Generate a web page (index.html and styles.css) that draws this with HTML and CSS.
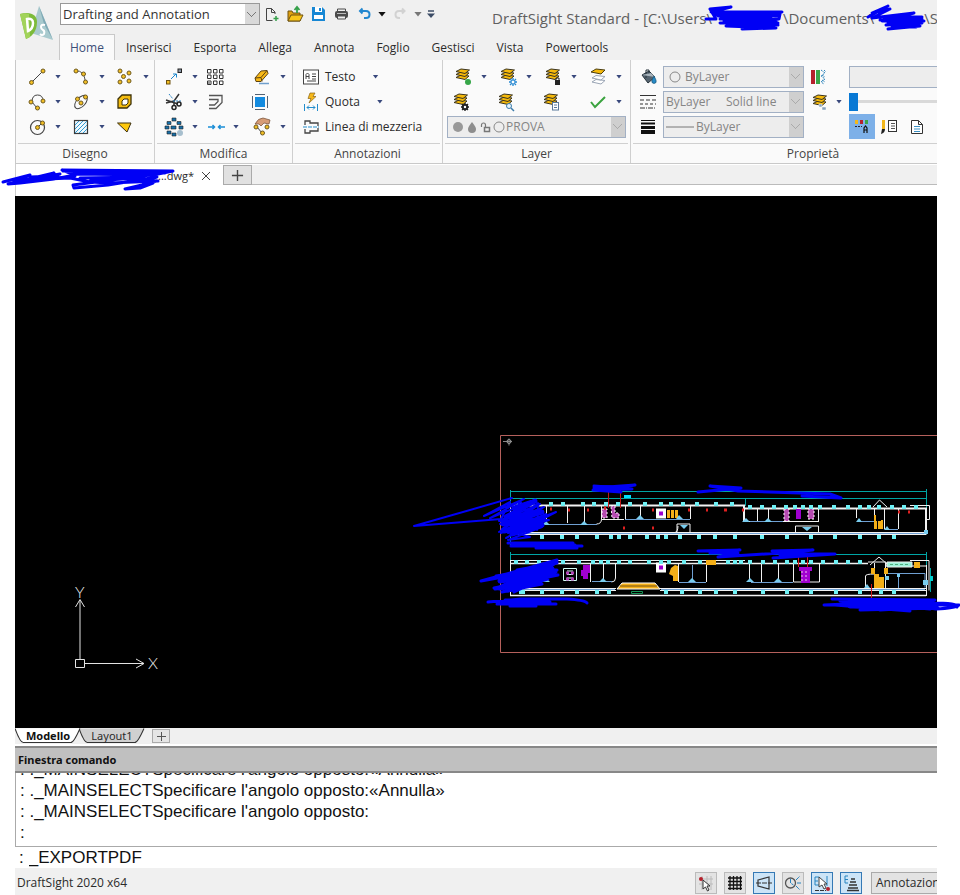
FILE: index.html
```html
<!DOCTYPE html>
<html lang="it">
<head>
<meta charset="utf-8">
<title>DraftSight Standard</title>
<link rel="stylesheet" href="styles.css">
</head>
<body>
<svg class="defs" aria-hidden="true">
  <symbol id="node" viewBox="-3 -3 6 6"><circle r="2" fill="#f2be24" stroke="#6e5a20" stroke-width="1"/></symbol>
  <symbol id="stack" viewBox="0 0 20 20">
    <g fill="#f5b90a" stroke="#3a3420" stroke-width="1" stroke-linejoin="round">
      <path d="M3 10.500l5-2.500 8 1-4 3.500z"/><path d="M3 7.500l5-2.500 8 1-4 3.500z"/><path d="M3 4.500l5-2.500 8.500 1-4.500 3.500z"/>
    </g>
  </symbol>
</svg>

<div class="app">
  <header class="header">
    <svg class="logo" viewBox="0 0 36 38" aria-label="DraftSight">
      <path d="M20 1L34 35L12 28z" fill="#a9cace"/><path d="M20 1L25 19L34 35z" fill="#7fa9b5"/>
      <path d="M1 9C12 6 18 10 18 17C18 27 12 32 7 34z" fill="#7dbb3a"/><path d="M1 9C5 8 8 8 10 9L11 32L7 34z" fill="#a2d35a"/>
      <path d="M8 14q6-1 6 4q0 6-5 8z" fill="none" stroke="#fff" stroke-width="2.500"/>
      <path d="M26 20q-4-1-4 2q0 2 2 3t1 4q-2 2-4 0" fill="none" stroke="#fff" stroke-width="2"/>
    </svg>
    <div class="header-main">
      <div class="quickbar">
        <select class="combo workspace" aria-label="Area di lavoro"><option>Drafting and Annotation</option></select>
        <div class="quick-tools">
          <button class="tool" aria-label="Nuovo"><svg viewBox="0 0 18 18"><path d="M3.500 3.500h5l3.500 3.500v2M3.500 3.500v12h6M8.500 3.500v4h3.500" fill="none" stroke="#444"/><path d="M13 11v5M10.500 13.500h5" stroke="#35a04a" stroke-width="1.500"/></svg></button>
          <button class="tool" aria-label="Apri"><svg viewBox="0 0 18 18"><path d="M2 16V6h4l1 2h7v8z" fill="#e0a010" stroke="#6e5210"/><path d="M2 16l3-6h12l-3 6z" fill="#f8c51a" stroke="#6e5210"/><path d="M11 8V3M8.500 5l2.500-3 2.500 3" fill="none" stroke="#35a04a" stroke-width="1.800"/></svg></button>
          <button class="tool" aria-label="Salva"><svg viewBox="0 0 18 18"><path d="M3 2h10l3 3v11H3z" fill="#1787d4"/><path d="M6 2h7v5H6zM5 10h9v4H5z" fill="#fff"/><path d="M10 3h2v3h-2z" fill="#1787d4"/></svg></button>
          <button class="tool" aria-label="Stampa"><svg viewBox="0 0 18 18"><rect x="3" y="6" width="13" height="7" rx="2" fill="#4b4b4b"/><path d="M5.500 6V4h8v2M5.500 11h8v3h-8z" fill="#eee" stroke="#4b4b4b"/><path d="M5 8.500h9" stroke="#bbb"/></svg></button>
          <button class="tool" aria-label="Annulla"><svg viewBox="0 0 18 18"><path d="M7.500 3.500L5 6l2.500 2.500M5 6h6q3.500 0 3.500 3.500T11 13H9" fill="none" stroke="#2387cf" stroke-width="2"/></svg></button>
          <button class="drop drop-black" aria-label="Elenco annulla"></button>
          <button class="tool" aria-label="Ripeti"><svg viewBox="0 0 18 18"><path d="M11 3.500L13.500 6 11 8.500M13.500 6H8Q4.500 6 4.500 9.500T8 13h1" fill="none" stroke="#d2d2d2" stroke-width="2"/></svg></button>
          <button class="drop drop-gray" aria-label="Elenco ripeti"></button>
          <button class="custom" aria-label="Personalizza"><svg viewBox="0 0 8 10"><path d="M1 2h6" stroke="#3c4c66" stroke-width="1.500"/><path d="M0 4.500h8L4 9z" fill="#3c4c66"/></svg></button>
        </div>
        <h1 class="title"><span>DraftSight Standard - [C:\Users\</span><svg class="mask mask-user" viewBox="0 0 78 26"><path d="M0 14H10L4 4L25 2L5 7H76L60 14H14L74 9L73 14L14 18H72L20 21L70 23L36 24M8 10H70M28 15L72 20M16 12H65M12 11H72M18 16H70M26 19H70M40 22H68"/></svg><span>\Documents\</span><svg class="mask mask-dir" viewBox="0 0 57 26"><path d="M0 12L20 1L4 8L22 4L4 13L46 8L14 16H56L18 20L54 18L20 24L52 21L18 12H54M12 15H50M16 14H54M20 18H50M24 22H48"/></svg><span>\S</span></h1>
      </div>
      <nav class="tabs" aria-label="Schede">
        <button class="tab active">Home</button><button class="tab">Inserisci</button><button class="tab">Esporta</button><button class="tab">Allega</button><button class="tab">Annota</button><button class="tab">Foglio</button><button class="tab">Gestisci</button><button class="tab">Vista</button><button class="tab">Powertools</button>
      </nav>
    </div>
  </header>

  <section class="ribbon" aria-label="Barra multifunzione">
    <div class="group">
      <div class="tools draw">
        <button class="tool" aria-label="Linea"><svg viewBox="0 0 20 20"><path d="M5 15L16 4" stroke="#444"/><use href="#node" x="1.500" y="12.500" width="6" height="6"/><use href="#node" x="13" y="1" width="6" height="6"/></svg></button><button class="drop" aria-label="Altre linee"></button>
        <button class="tool" aria-label="Polilinea"><svg viewBox="0 0 20 20"><path d="M5 4Q13 3 14.500 15" fill="none" stroke="#555"/><use href="#node" x="2" y="1" width="6" height="6"/><use href="#node" x="9.500" y="4" width="6" height="6"/><use href="#node" x="11.500" y="12" width="6" height="6"/></svg></button><button class="drop" aria-label="Altre polilinee"></button>
        <button class="tool" aria-label="Punti"><svg viewBox="0 0 20 20"><use href="#node" x="2" y="1" width="6" height="6"/><use href="#node" x="11" y="3" width="6" height="6"/><use href="#node" x="5.500" y="6.500" width="6" height="6"/><use href="#node" x="2" y="12" width="6" height="6"/><use href="#node" x="11" y="11" width="6" height="6"/></svg></button><button class="drop" aria-label="Altri punti"></button>
        <button class="tool" aria-label="Arco"><svg viewBox="0 0 20 20"><path d="M10 16L5 10Q5 3 10.500 3T16 9" fill="none" stroke="#444"/><use href="#node" x="1" y="7" width="6" height="6"/><use href="#node" x="13" y="6" width="6" height="6"/><use href="#node" x="7.500" y="13" width="6" height="6"/></svg></button><button class="drop" aria-label="Altri archi"></button>
        <button class="tool" aria-label="Ellisse"><svg viewBox="0 0 20 20"><ellipse cx="10" cy="10" rx="8" ry="4.500" transform="rotate(-48 10 10)" fill="none" stroke="#444"/><use href="#node" x="3.500" y="4" width="6" height="6"/><use href="#node" x="11.500" y="2" width="6" height="6"/><use href="#node" x="7" y="8" width="6" height="6"/></svg></button><button class="drop" aria-label="Altre ellissi"></button>
        <button class="tool" aria-label="Regione"><svg viewBox="0 0 20 20"><path d="M3 7l4-4h9v9l-4 4H3z" fill="#f5bd10" stroke="#3d3208" stroke-width="1.300"/><path d="M7 9l2-2h4v4l-2 2H7z" fill="#fff" stroke="#3d3208"/></svg></button><span></span>
        <button class="tool" aria-label="Cerchio"><svg viewBox="0 0 20 20"><circle cx="10.500" cy="10.500" r="7" fill="none" stroke="#444" stroke-width="1.200"/><path d="M10 11l5-5" stroke="#444"/><use href="#node" x="7.500" y="7.500" width="6" height="6"/><use href="#node" x="12.500" y="3" width="6" height="6"/></svg></button><button class="drop" aria-label="Altri cerchi"></button>
        <button class="tool" aria-label="Tratteggio"><svg viewBox="0 0 20 20"><rect x="3.500" y="3.500" width="13" height="13" fill="#eef9ff" stroke="#3b3b3b" stroke-width="1.200"/><path d="M4 8l4-4M4 12l8-8M4 16L16 4M8 16l8-8M12 16l4-4" stroke="#339ad0"/></svg></button><button class="drop" aria-label="Altri tratteggi"></button>
        <button class="tool" aria-label="Solido"><svg viewBox="0 0 20 20"><path d="M2.500 6H16l-4 9z" fill="#fec80d" stroke="#3c3010"/></svg></button><span></span>
      </div>
      <div class="caption">Disegno</div>
    </div>

    <div class="group">
      <div class="tools modify">
        <button class="tool" aria-label="Sposta"><svg viewBox="0 0 20 20"><rect x="2.500" y="13.500" width="3.500" height="3.500" fill="#f2be24" stroke="#6e5210"/><rect x="14" y="2" width="3.500" height="3.500" fill="#8a97a6" stroke="#222"/><path d="M7 12l5-5M9 7h3.500v3.500" fill="none" stroke="#1b86cc"/></svg></button><button class="drop" aria-label="Altri spostamenti"></button>
        <button class="tool" aria-label="Serie"><svg viewBox="0 0 20 20"><path d="M2.500 2.500h3.500v3.500H2.500zM8.500 2.500H12v3.500H8.500zM14.500 2.500H18v3.500h-3.500zM2.500 8H6v3.500H2.500zM8.500 8H12v3.500H8.500zM14.500 8H18v3.500h-3.500zM2.500 14H6v3.500H2.500zM8.500 14H12v3.500H8.500zM14.500 14H18v3.500h-3.500z" fill="#fff" stroke="#333"/><path d="M3 14.500h2.500V17H3z" fill="#999"/></svg></button><span></span>
        <button class="tool" aria-label="Elimina"><svg viewBox="0 0 20 20"><path d="M7 16.500h10" stroke="#6f9fcc" stroke-width="1.500"/><path d="M3 11l6-7 6-.5 1 3-7 8H4z" fill="#f9b916" stroke="#5e4310"/><path d="M3 11l6-.5 6-7M9 10.500l1 4" fill="none" stroke="#5e4310"/></svg></button><button class="drop" aria-label="Altre eliminazioni"></button>
        <button class="tool" aria-label="Taglia"><svg viewBox="0 0 20 20"><path d="M2 8l12 4M10 14V9l5-7M2 11l8-2" fill="none" stroke="#333" stroke-width="1.500"/><path d="M5 2l4 5M9 9h8" stroke="#2a83c4" stroke-dasharray="2 1"/><circle cx="15" cy="12" r="2" fill="none" stroke="#222" stroke-width="1.500"/><circle cx="10" cy="15.500" r="2" fill="none" stroke="#222" stroke-width="1.500"/></svg></button><button class="drop" aria-label="Altri tagli"></button>
        <button class="tool" aria-label="Offset"><svg viewBox="0 0 20 20"><path d="M4 3.500h13v7l-6 6H4M4 7.500h9v2l-3.500 3.500H4" fill="none" stroke="#555" stroke-width="1.300"/></svg></button><span></span>
        <button class="tool" aria-label="Stira"><svg viewBox="0 0 20 20"><rect x="3" y="5" width="10" height="10" fill="#138be0"/><path d="M.5 4v12M15.500 4v12M3 2.500h10M3 17.500h10" stroke="#526172"/></svg></button><span></span>
        <button class="tool" aria-label="Serie polare"><svg viewBox="0 0 20 20"><path d="M8 1h4v3H8zM3 4.500h4v3H3zM13 4.500h4v3h-4zM1 9h4v3H1zM7 9h5v3H7zM15 9h4v3h-4zM3 14h4v3H3zM8 16h4v3H8z" fill="#176fa8" stroke="#222" stroke-width=".6"/><circle cx="16" cy="16" r="3" fill="#a7bfce"/></svg></button><button class="drop" aria-label="Altre serie"></button>
        <button class="tool" aria-label="Unisci"><svg viewBox="0 0 20 20"><path d="M3 10h7M7.500 8l2 2-2 2M20 10h-7M15.500 8l-2 2 2 2" fill="none" stroke="#1b8ed6" stroke-width="1.500"/></svg></button><button class="drop" aria-label="Altre unioni"></button>
        <button class="tool" aria-label="Modifica polilinea"><svg viewBox="0 0 20 20"><path d="M10 16L5 10" stroke="#444"/><use href="#node" x="1" y="7" width="6" height="6"/><use href="#node" x="12" y="7" width="6" height="6"/><use href="#node" x="7.500" y="13" width="6" height="6"/><path d="M3 7q3-6 8-6l7 2-1 4-5-1-3 3-2-2z" fill="#d69c76" stroke="#704a32" stroke-width=".7"/></svg></button><button class="drop" aria-label="Altre modifiche"></button>
      </div>
      <div class="caption">Modifica</div>
    </div>

    <div class="group">
      <div class="notes">
        <div class="note"><button class="labelled"><svg viewBox="0 0 20 20"><rect x="2.500" y="3" width="15" height="14" fill="#fff" stroke="#444"/><path d="M5 12V7.500L6.500 6 8 7.500V12M5 9.500h3M11 7h4M11 9.500h4M6 14h9M11 12h4" fill="none" stroke="#444"/></svg>Testo</button><button class="drop" aria-label="Altri testi"></button></div>
        <div class="note"><button class="labelled"><svg viewBox="0 0 20 20"><path d="M9 1h5l-2 3.500h3L8 11l2-4.500H7z" fill="#f6b81a" stroke="#8a651a" stroke-width=".7"/><path d="M3.500 12v7M16.500 12v7M6 15.500h8M8 13.500l-2 2 2 2M12 13.500l2 2-2 2" fill="none" stroke="#238dcc"/></svg>Quota</button><button class="drop" aria-label="Altre quote"></button></div>
        <div class="note"><button class="labelled"><svg viewBox="0 0 20 20"><path d="M4 8V4h5v2h8v3M4 12v4h5v-2h8v-3" fill="none" stroke="#444" stroke-width="1.300"/><path d="M2 10h16" stroke="#238dcc" stroke-dasharray="4 1"/></svg>Linea di mezzeria</button></div>
      </div>
      <div class="caption">Annotazioni</div>
    </div>

    <div class="group">
      <div class="tools layers">
        <button class="tool" aria-label="Attiva layer"><svg viewBox="0 0 20 20"><use href="#stack"/><circle cx="15" cy="15" r="3" fill="#36a648"/></svg></button><button class="drop" aria-label="Altri layer"></button>
        <button class="tool" aria-label="Congela layer"><svg viewBox="0 0 20 20"><use href="#stack"/><path d="M15 11v8M11 15h8M12 12l6 6M18 12l-6 6" stroke="#2789d2" stroke-width="1.300"/><circle cx="15" cy="15" r="2" fill="#fff" stroke="#2789d2"/></svg></button><button class="drop" aria-label="Altri congelamenti"></button>
        <button class="tool" aria-label="Blocca layer"><svg viewBox="0 0 20 20"><use href="#stack"/><rect x="12" y="13" width="5" height="5" fill="#222"/><path d="M13 13v-2h3v2" fill="none" stroke="#222"/></svg></button><button class="drop" aria-label="Altri blocchi"></button>
        <button class="tool" aria-label="Isola layer"><svg viewBox="0 0 20 20"><g fill="#fff" stroke="#9aa5b5"><path d="M4 15l4-2.500 9 1-4 3.500z"/><path d="M4 11l4-2.500 9 1-4 3.500z"/></g><path d="M3 5l5-3 9 1-4 4z" fill="#f5b90a" stroke="#4a3d10"/></svg></button><button class="drop" aria-label="Altri isolamenti"></button>
        <button class="tool" aria-label="Gestione layer"><svg viewBox="0 0 20 20"><g transform="translate(-2 0)"><use href="#stack" width="20" height="20"/></g><circle cx="12" cy="15" r="2.200" fill="#fff" stroke="#222" stroke-width="2"/><path d="M12 11v1.500M12 17.500V19M8 15h1.500M14.500 15H16M9 12l1 1M14 17l1 1M9 18l1-1M14 13l1-1" stroke="#222" stroke-width="1.300"/></svg></button><span></span>
        <button class="tool" aria-label="Anteprima layer"><svg viewBox="0 0 20 20"><g transform="translate(-2 0)"><use href="#stack" width="20" height="20"/></g><circle cx="11" cy="14" r="2.500" fill="#e5f4ff" stroke="#3d7caa"/><path d="M13 16l3 3" stroke="#3d7caa" stroke-width="1.500"/></svg></button><span></span>
        <button class="tool" aria-label="Stati layer"><svg viewBox="0 0 20 20"><g transform="translate(-2 0)"><use href="#stack" width="20" height="20"/></g><rect x="9.500" y="10.500" width="6" height="7.500" fill="#fff" stroke="#59789a"/><path d="M11 13h3M11 15.500h3" stroke="#59789a"/></svg></button><span></span>
        <button class="tool" aria-label="Applica layer"><svg viewBox="0 0 20 20"><path d="M3 10l4 5L17 5" fill="none" stroke="#3aa33f" stroke-width="2"/></svg></button><button class="drop" aria-label="Altre applicazioni"></button>
        <div class="field layer-field"><svg class="layer-marks" viewBox="0 0 54 16"><circle cx="6" cy="8" r="5" fill="#989898"/><path d="M20 3Q16 8 16 10a4 4 0 0 0 8 0Q24 8 20 3z" fill="#8d8d8d"/><path d="M29.500 8V6a2 2 0 0 1 4 0v2" fill="none" stroke="#777" stroke-width="1.200"/><path d="M32.500 8.500h5v4h-5z" fill="none" stroke="#777" stroke-width="1.500"/><circle cx="47" cy="8" r="5" fill="none" stroke="#888"/></svg><select class="combo muted" aria-label="Layer"><option>PROVA</option></select></div>
      </div>
      <div class="caption">Layer</div>
    </div>

    <div class="group properties">
      <div class="props">
        <svg class="icon" viewBox="0 0 20 20"><path d="M4 8l7-4 6 6-7 6z" fill="#566470" stroke="#26323a"/><path d="M8 11V3h3v6" fill="none" stroke="#26323a"/><path d="M4 8l13 2-4-4z" fill="#aab5bd"/><path d="M16 9q-3 5-2 6.500 2 2 4 0Q19 14 16 9z" fill="#278cc8" stroke="#1b5577" stroke-width=".7"/></svg>
        <div class="field color-field"><svg class="color-mark" viewBox="0 0 14 14"><circle cx="7" cy="7" r="5" fill="none" stroke="#888"/></svg><select class="combo muted" aria-label="Colore linea"><option>ByLayer</option></select></div>
        <div class="side"><svg class="icon" viewBox="0 0 20 20"><path d="M2 3h4v14H2z" fill="#b5202c"/><path d="M7 3h4v14H7z" fill="#3aa548"/><path d="M12 3l4 3-4 3 4 3-4 3 3 2M15 3l2 2M13 8l3 2M13 13l3 2" fill="none" stroke="#2a83bb" stroke-dasharray="2 1"/></svg></div>
        <input class="entry" aria-label="Trasparenza" value="">

        <svg class="icon" viewBox="0 0 20 20"><path d="M2 3.500h16" stroke="#333"/><path d="M2 8h16" stroke="#333" stroke-dasharray="4 2"/><path d="M2 12h16" stroke="#333" stroke-dasharray="3 2"/><path d="M2 16h16" stroke="#333" stroke-dasharray="5 1 1 1"/></svg>
        <div class="field"><select class="combo muted" aria-label="Stile linea"><option>ByLayer &nbsp; &nbsp; Solid line</option></select></div>
        <div class="side"><button class="tool" aria-label="Proprietà layer"><svg viewBox="0 0 20 20"><g transform="translate(1 1)"><use href="#stack" width="20" height="20"/></g><path d="M10 12h3v3h-3zM13 15h4v3h-4z" fill="#86a3bd" stroke="#fff" stroke-width=".5"/></svg></button><button class="drop" aria-label="Altre proprietà layer"></button></div>
        <input class="slider" type="range" min="0" max="90" value="0" aria-label="Livello trasparenza">

        <svg class="icon" viewBox="0 0 20 20"><path d="M3 3.500h14" stroke="#111" stroke-width="1"/><path d="M3 6.500h14" stroke="#111" stroke-width="2"/><path d="M3 10.500h14" stroke="#111" stroke-width="3"/><path d="M3 15h14" stroke="#111" stroke-width="4"/></svg>
        <div class="field weight-field"><svg class="weight-mark" viewBox="0 0 28 4"><path d="M0 2h28" stroke="#777"/></svg><select class="combo muted" aria-label="Spessore linea"><option>ByLayer</option></select></div>
        <span></span>
        <div class="prop-buttons">
          <button class="tool pressed" aria-label="Proprietà"><svg viewBox="0 0 20 20"><path d="M3 3h3v4H3z" fill="#f2b71b"/><path d="M8 3h3v4H8z" fill="#b5202c"/><path d="M13 3h3v4h-3z" fill="#3aa548"/><path d="M3 9.500h7" stroke="#223" stroke-dasharray="2 1"/><path d="M12 16v-5l1.500-2 1.500 2v5M12 13h3" fill="none" stroke="#111" stroke-width="1.200"/></svg></button>
          <button class="tool" aria-label="Copia proprietà"><svg viewBox="0 0 20 20"><path d="M2 3h3v9H2z" fill="#f2b71b"/><path d="M2 12h3q0 4-4 5z" fill="#222"/><rect x="8.500" y="3.500" width="8" height="11" fill="#fff" stroke="#333"/><path d="M11 6.500h4M11 9h4M11 11.500h4" stroke="#555"/></svg></button>
          <button class="tool" aria-label="Elenco"><svg viewBox="0 0 20 20"><path d="M3.500 3.500h7l4 4v9h-11zM10.500 3.500v4h4" fill="#fff" stroke="#333"/><path d="M6 9.500h6M6 12h6M6 14.500h6" stroke="#3b91c4"/></svg></button>
        </div>
      </div>
      <div class="caption">Proprietà</div>
    </div>
  </section>

  <div class="filebar">
    <div class="filetab"><span>...dwg*</span><button class="close" aria-label="Chiudi"><svg viewBox="0 0 12 12"><path d="M2 2l8 8M10 2l-8 8" stroke="#444"/></svg></button>
      <svg class="tab-mask" viewBox="0 0 180 30"><path d="M3 17L30 10L12 18L54 8L8 19L20 18L54 14L75 10L62 5L173 6L158 9L73 20L74 23L108 20L157 12L142 16H157L142 20L125 24L140 23L153 18M63 6L165 8M75 9L155 10M80 13L145 12M90 16L140 13M30 12L58 11M24 15L70 13L90 17L110 18L158 16M20 16L60 9M30 16L75 11"/></svg>
    </div>
    <button class="add-tab" aria-label="Nuovo disegno"><svg viewBox="0 0 14 14"><path d="M7 1v12M1 7h12" stroke="#444" stroke-width="1.500"/></svg></button>
    <div class="filebar-rest"></div>
  </div>

  <main class="canvas">
    <svg class="drawing" viewBox="15 196 922 532" preserveAspectRatio="xMaxYMin meet" role="img" aria-label="Pianta">
      <!-- sheet border and view marker -->
      <path d="M937 435.500H500.500V652.500H937" fill="none" stroke="#b5605c"/>
      <path d="M503 441.500h9M509 438.500v7" stroke="#888"/><circle cx="509" cy="441.500" r="2" fill="none" stroke="#999"/>
      <!-- coordinate system symbol -->
      <g fill="none" stroke="#e4e4e4"><path d="M75.500 659.500h9v8h-9zM80 659V600M75.500 607L80 599.500 84.500 607M85 663.500h59M136 659l8 4.500-8 4.500"/></g>
      <text class="axis" x="75" y="598">Y</text><text class="axis" x="148" y="669">X</text>

      <!-- dimension lines -->
      <g fill="none" stroke="#00a5a5"><path d="M510 491.500h417M510 498.500h417M510.500 490v57M926.500 489v20M745.500 498v8M510 545.500h60M510 554.500h417M510.500 552v12M926.500 552v14M930.500 568v24"/></g>
      <path d="M624 496.500h7" stroke="#00e0ff" stroke-width="3"/>

      <!-- upper building -->
      <g fill="none" stroke="#f2f2f2">
        <path d="M510 505.500h234v16M743 508.500h183v26" stroke-width="2"/>
        <path d="M510 532.500h416M510 534.500h416M510.500 505v30"/>
        <path d="M546.500 506v17M567.500 506v17M584.500 506v17M601.500 506v13q0 5-5 5M625.500 506v13M640.500 506v13M690.500 506v13M677 532v-8h13v8M757.500 509v12M768.500 509v12M818.500 509v12M795.500 533v-7h23v7M856.500 509v9M874.500 509v20M884.500 509v20M898.500 509v20M873 507l6.500-7 7.500 7M910 505.500h19.500v14h-3M674 533q4-1 4-7"/>
        <path d="M602 519.500h22M743 521.500h8M783 521.500h36"/>
      </g>
      <path d="M540 524.500h57M625 519.500h65M750 521.500h33M857 521.500h17M885 529.500h13M512 533.500h413" fill="none" stroke="#6f9fd2"/>
      <path d="M602 509h5v9h-5zM611 506h4v7h4v5h-7zM784 509h5v12h-5zM808 509h6v10h-6z" fill="#b54bb0" stroke="#fff" stroke-dasharray="2 2"/>
      <path d="M796 509h5v10h-5z" fill="#9d00cf"/><path d="M657.500 510h7v7h-7z" fill="#9d00cf" stroke="#fff" stroke-width="3"/>
      <path d="M667 514h11M874 525h9" stroke="#f4af18" stroke-width="8" stroke-dasharray="3 1"/><path d="M875 515v13M882 520v9" stroke="#f4af18" stroke-width="2"/>
      <path class="windows" d="M517 504h4m28 0h4m8 0h4m16 0h4m7 0h4m8 0h4m8 0h4m8 0h4m11 0h4m12 0h4m6 0h4m8 0h4m10 0h4m15 0h4m12 0h4M748 507h4m8 0h4m8 0h4m8 0h4m5 0h4m4 0h4m4 0h4m5 0h4m10 0h4m10 0h4m8 0h4m5 0h4m6 0h4m9 0h4m8 0h4m8 0h4"/>
      <path class="windows" d="M540 537h4m16 0h4m11 0h4m16 0h4m10 0h4m4 0h4m7 0h4m13 0h4m7 0h4m4 0h4m10 0h4m15 0h4m12 0h4m16 0h4m23 0h4m21 0h4m20 0h4m20 0h4m21 0h4m15 0h4m11 0h4"/>
      <path class="doors" d="M542 525l4-4 4 4zM580 525l4-4 4 4zM636 519l4-4 4 4zM676 519l3-4 4 4zM680 525h8l-4 4zM742 522l4-4 4 4zM764 522l4-4 4 4zM802 527h10l-5 4zM856 522l3-4 3 4zM884 530l3-4 3 4zM924 530h4v4h-4z"/>
      <path d="M531 510h2M550 509h2M568 510h2M587 510h2M652 510h2M688 510h2M706 510h2M724 510h3M742 510h2M623 528h2M652 528h2M908 512h2M898 512h2M604 508h2" stroke="#e02020" stroke-width="3"/>
      <path d="M608.500 490v18M620.500 490v18" stroke="#c01818"/>

      <!-- lower building -->
      <g fill="none" stroke="#f2f2f2">
        <path d="M510 563.500h358M510 595.500h416" stroke-width="1.500"/><path d="M510 560.500h235M510.500 560v36M510 588.500h106M660 588.500h266M510 590.500h106M660 590.500h266M926.500 565v31M910 560.500h19v30"/>
        <path d="M590.500 564v18M603.500 564v18M615.500 564v14q0 4-4 4M678.500 564v18M706.500 564v18M749.500 564v18M761.500 564v18M778.500 564v18M793.500 564v18h26v-18M865.500 590v-14q0-2 9-2M874.500 563v26h11v-26M870 565l9-8 8 7M868 562h18v4h40"/>
      </g>
      <path d="M592 581.500h20M679 582.500h27M751 582.500h42M887 573.500h38v14M898.500 574v14M692.500 565v14M512 589.500h103M661 589.500h264" fill="none" stroke="#6f9fd2"/>
      <path d="M563.500 568.500h13v12h-13zM567 571h6M567 574.500h6M567 578h6" fill="none" stroke="#d5fff5"/><path d="M566 573h8M566 579h8" stroke="#b040b0" stroke-width="3" stroke-dasharray="3 2"/>
      <path d="M583 565h7v8h-2v6h-5v-3h-2v-6h2z" fill="#a000d0"/><path d="M799 567h13v4h-2v12h-9v-12h-2z" fill="#a000d0"/><path d="M801 572h8M801 576h8M801 580h8" stroke="#f0c0ec" stroke-dasharray="2 2"/>
      <path d="M657.500 564h7v7h-7z" fill="#9d00cf" stroke="#fff" stroke-width="3"/>
      <path d="M671 568l4-3 3 1v15h-5v-5l-4-2zM706 560h10v5h-10zM874 574h5v3h5v11h-10zM914 562h6v6h-6z" fill="#f4af18"/><path d="M871 571h4M884 571h4" stroke="#f4af18" stroke-width="6"/>
      <path d="M617 589l5-6h33l5 6z" fill="#f4af18" stroke="#fff"/><path d="M620 586h37" stroke="#75510e"/>
      <path d="M631.500 591.500h11v2h-11z" fill="none" stroke="#159556"/><path d="M887 562h25v5h-25z" fill="#9cf2da" stroke="#eee"/><path d="M890 564.500h20" stroke="#4fae7e" stroke-dasharray="3 2"/>
      <path class="windows" d="M514 562h4m7 0h4m8 0h4m20 0h4m12 0h4m10 0h4m4 0h4m3 0h4m7 0h4m7 0h4m15 0h4m8 0h4m4 0h4m11 0h4m12 0h4m24 0h4m3 0h4m2 0h4m5 0h4m9 0h4m8 0h4m8 0h4m4 0h4m4 0h4m4 0h4m8 0h4m9 0h4m8 0h4m8 0h4"/>
      <path class="windows" d="M519 592h6m15 0h4m16 0h4m11 0h4m16 0h4m8 0h4m53 0h4m12 0h4m14 0h4m12 0h4m15 0h4m24 0h4m20 0h4m20 0h4m21 0h4m20 0h4m17 0h4m9 0h4"/>
      <path class="doors" d="M599 582l4-4 4 4zM541 582l5-4 4 4zM688 582l4-4 4 4zM746 582l4-4 4 4zM774 582l4-4 4 4zM864 588l3-4 3 4zM885 576h4v4h-4zM897 574h3v3h-3zM923 580h5v5h-5z"/><path d="M930 576h3v5h-3z" fill="#00cfcf"/>
      <path d="M798.500 556v11M807.500 556v11M871.500 584v21h8M917 601h16" fill="none" stroke="#d11a1a"/>

      <!-- freehand marks -->
      <g class="ink">
        <path d="M512 498L414 526L501 519L510 502L484 516L524 499L490 518L535 500L500 524L544 507L501 533L546 514L506 538L556 512L510 530L542 527L508 540L530 537L502 529L538 503L537 530L520 501L508 533L549 520L499 521L540 504L499 532"/>
        <path class="broad" d="M514 508L535 501L506 517L542 512L503 524L543 519L504 531L542 525L512 534L532 528"/>
        <path d="M508 543H573M511 546H582M536 548H577M520 544H570M530 545H575"/>
        <path d="M594 486L632 489L602 490L635 485L594 488L621 492L593 490L626 488"/>
        <path d="M698 492L741 488L710 486L738 491L830 494L841 498L802 496"/>
        <path d="M557 560L481 581L552 568L496 576L558 575L494 588L548 579L502 592L542 584L495 589L541 567L502 575L557 563L517 570L557 570L505 585L556 572L514 592L557 562"/>
        <path class="broad" d="M550 564L508 576L552 569L500 581L553 574L500 588L536 582L508 590"/>
        <path d="M488 602L521 599H567Q585 600 587 603M497 604H556M505 600H535M510 606H536M500 602H550"/>
        <path d="M698 551L740 550L710 553H738L718 557L780 553L835 554L773 558M772 551L813 550L785 553L820 555L780 555"/>
        <path d="M832 599L935 600L824 605L959 605Q955 608 936 609L900 603L850 606L938 608L860 610L930 603Q960 603 957 607M845 602L925 602L835 605L910 611L870 600L930 609L840 601"/>
        <path class="broad" d="M850 602H932L850 606H930L880 609"/>
      </g>
    </svg>
  </main>

  <div class="sheets">
    <button class="sheet current">Modello<svg viewBox="0 0 64 17" preserveAspectRatio="none"><path d="M0 .5Q5 15.500 8 15.500H54Q57 15.500 63 .5"/></svg></button>
    <button class="sheet">Layout1<svg viewBox="0 0 64 17" preserveAspectRatio="none"><path d="M0 .5Q5 15.500 8 15.500H54Q57 15.500 63 .5"/></svg></button>
    <button class="add-sheet" aria-label="Nuovo foglio"><svg viewBox="0 0 11 11"><path d="M5.500 1v9M1 5.500h9" stroke="#555"/></svg></button>
  </div>

  <section class="command" aria-label="Finestra comando">
    <h2 class="command-title">Finestra comando</h2>
    <div class="history">
      <div>: ._MAINSELECTSpecificare l'angolo opposto:«Annulla»</div>
      <div>: ._MAINSELECTSpecificare l'angolo opposto:«Annulla»</div>
      <div>: ._MAINSELECTSpecificare l'angolo opposto:</div>
      <div>:</div>
    </div>
    <div class="prompt"><label for="cmd">:</label><input id="cmd" value="_EXPORTPDF"></div>
  </section>

  <footer class="status">
    <span class="version">DraftSight 2020 x64</span>
    <div class="modes">
      <button class="mode" aria-label="Snap"><svg viewBox="0 0 20 20"><path d="M3 6h14M3 11h14M6 3v14M11 3v14M15 3v14" stroke="#bbb"/><circle cx="5" cy="6" r="2" fill="#b5202c"/><path d="M7 7v9l2.500-2 2 4 1.500-1-2-4h3z" fill="#fff" stroke="#333"/></svg></button>
      <button class="mode" aria-label="Griglia"><svg viewBox="0 0 20 20"><path d="M3 5h14M3 8.500h14M3 12h14M3 15.500h14M5 3v14M8.500 3v14M12 3v14M15.500 3v14" stroke="#111" stroke-width="1.300"/></svg></button>
      <button class="mode on" aria-label="Orto"><svg viewBox="0 0 20 20"><path d="M4 7l11-3v12L4 13z" fill="none" stroke="#333" stroke-width="1.200"/><path d="M2 10h16" stroke="#333" stroke-dasharray="5 1"/></svg></button>
      <button class="mode" aria-label="Polare"><svg viewBox="0 0 20 20"><circle cx="7.500" cy="10" r="5" fill="none" stroke="#555" stroke-width="1.300"/><path d="M7.500 6v4l3 2M13 7l4-4M14 10h5M13 13l4 4" fill="none" stroke="#2784c0" stroke-dasharray="4 1"/></svg></button>
      <button class="mode on" aria-label="ESnap"><svg viewBox="0 0 20 20"><path d="M7 4H3v8h4M3 8h3M15 3v10" fill="none" stroke="#2784c0"/><path d="M3 17.500h11" stroke="#333" stroke-dasharray="4 1"/><path d="M7 4v10l3-2 2 4 2-1-2-4h3z" fill="#fff" stroke="#444"/><circle cx="16" cy="16" r="2" fill="#b5202c"/></svg></button>
      <button class="mode on" aria-label="ETrack"><svg viewBox="0 0 20 20"><path d="M7 3H4v7h3M4 6.500h3" fill="none" stroke="#2784c0"/><path d="M10 6h4M9 9h6M8 12h8M7 15h10M6 17.500h12" stroke="#333" stroke-width="1.300"/></svg></button>
    </div>
    <button class="scale">Annotazione</button>
  </footer>
</div>
</body>
</html>
```
FILE: styles.css
```css
* { box-sizing: border-box; }
body { margin: 0; background: #fff; color: #2b2b2b; font: 12px/18px "Open Sans", "Noto Sans", sans-serif; }
button { padding: 0; border: 0; background: none; color: inherit; font: inherit; }
svg { display: block; }
.defs { position: absolute; width: 0; height: 0; }
.app { display: flex; flex-direction: column; min-height: 100vh; margin: 0 23px 0 15px; }

.header { display: flex; height: 60px; background: #f0f0f0; overflow: hidden; }
.logo { flex: none; width: 36px; height: 38px; margin: 5px 4px 0; }
.header-main { flex: 1; min-width: 0; display: flex; flex-direction: column; justify-content: space-between; }
.quickbar { display: flex; align-items: flex-start; white-space: nowrap; }
.combo {
  --chevron: #777;
  --cap: #d9d9d9;
  appearance: none; width: 100%; height: 22px; margin: 0; padding: 0 16px 0 2px;
  border: 1px solid #a2b0c4; border-radius: 0; color: #333; font: inherit; line-height: 20px;
  background:
    linear-gradient(45deg, transparent 42%, var(--chevron) 42%, var(--chevron) 58%, transparent 58%) no-repeat right 7px center / 5px 5px,
    linear-gradient(-45deg, transparent 42%, var(--chevron) 42%, var(--chevron) 58%, transparent 58%) no-repeat right 3px center / 5px 5px,
    linear-gradient(var(--cap), var(--cap)) no-repeat right top / 14px 100%,
    #fff;
}
.combo.muted { --chevron: #aaa; --cap: #cfcfcf; background-color: #ededed; color: #858585; }
.combo.workspace { flex: none; width: 200px; margin: 3px 0 0 1px; border-color: #999; font-size: 13px; }
.quick-tools { display: flex; flex: none; align-items: center; gap: 5px; height: 28px; margin-left: 3px; }
.quick-tools .tool, .quick-tools .tool svg { width: 18px; height: 18px; }
.custom svg { width: 8px; height: 10px; }
.title { display: flex; align-items: center; margin: 5px 0 0 57px; color: #606060; font-size: 15px; font-weight: 400; line-height: 24px; }
.mask { flex: none; height: 26px; margin: 0 -1px 0 -6px; overflow: visible; }
.mask path, .tab-mask path { fill: none; stroke: #0000f5; stroke-width: 3; stroke-linejoin: round; stroke-linecap: round; }
.mask-user { width: 78px; }
.mask-dir { width: 57px; }

.tabs { display: flex; align-items: flex-end; }
.tab { height: 26px; padding: 0 10px; border: 1px solid transparent; border-bottom: 0; }
.tab.active { background: #fafafa; border-color: #c9c9c9; color: #3c4f78; }

.ribbon { display: flex; height: 104px; background: #fafafa; border: solid #c9c9c9; border-width: 0 0 1px 1px; overflow: hidden; }
.group { flex: none; display: flex; flex-direction: column; justify-content: space-between; padding: 4px 2px 0; border-right: 1px solid #cfcfcf; }
.caption { border-top: 1px solid #d0d0d0; color: #444; line-height: 19px; text-align: center; }
.tools { display: grid; grid-auto-rows: 25px; align-items: center; }
.draw { grid-template-columns: repeat(3, 20px 24px); width: 134px; padding-left: 9px; }
.modify { grid-template-columns: 20px 21px 20px 27px 20px 17px; width: 133px; padding-left: 7px; }
.tool { display: grid; place-items: center; }
.tool svg, .icon, .labelled svg { flex: none; width: 20px; height: 20px; }
.drop { flex: none; width: 6px; height: 4px; margin-left: 8px; background: #38487c; clip-path: polygon(0 0, 100% 0, 50% 100%); }
.quick-tools .drop { width: 8px; height: 5px; margin: 0; }
.drop.drop-black { background: #111; }
.drop.drop-gray { background: #777; }
.notes { display: grid; grid-auto-rows: 25px; width: 145px; padding-left: 6px; }
.note { display: flex; align-items: center; }
.note .drop { margin-left: 17px; }
.labelled { display: flex; align-items: center; gap: 4px; }
.layers { grid-template-columns: repeat(4, 20px 25px); width: 183px; padding: 0 2px 0 8px; }
.layer-field { grid-column: 1 / -1; margin-left: -6px; }
.field { position: relative; }
.field svg { position: absolute; }
.layer-field .combo { width: 179px; padding-left: 58px; }
.layer-marks { left: 5px; top: 3px; width: 54px; height: 16px; }
.properties { width: 364px; border-right: 0; }
.props { display: grid; grid-template-columns: 20px 141px 35px 1fr; grid-auto-rows: 25px; column-gap: 5px; align-items: center; padding-left: 5px; }
.color-field .combo { padding-left: 21px; }
.color-mark { left: 5px; top: 4px; width: 14px; height: 14px; }
.weight-field .combo { padding-left: 32px; }
.weight-mark { left: 3px; top: 9px; width: 28px; height: 4px; }
.side { display: flex; align-items: center; }
.entry { width: 100%; height: 22px; border: 1px solid #a2b0c4; background: #ededed; }
.slider { appearance: none; width: 100%; height: 20px; margin: 0; background: linear-gradient(#d9d9d9, #d9d9d9) no-repeat center / 100% 3px; }
.slider::-webkit-slider-thumb { appearance: none; width: 9px; height: 18px; background: #0878d4; }
.prop-buttons { display: flex; align-items: center; gap: 2px; }
.prop-buttons .tool { width: 26px; height: 25px; }
.prop-buttons .pressed { background: #7db0e8; }
.props .drop { margin-left: 7px; }

.filebar { display: flex; height: 32px; padding-top: 1px; border-left: 1px solid #ccc; }
.filetab { position: relative; display: flex; align-items: center; justify-content: flex-end; gap: 6px; width: 207px; height: 21px; padding-right: 11px; font-size: 11px; }
.close svg { width: 12px; height: 12px; }
.tab-mask { position: absolute; left: -16px; top: 0; width: 180px; height: 30px; }
.add-tab { display: grid; place-items: center; width: 29px; height: 20px; border: 1px solid #aaa; background: #e1e1e1; }
.add-tab svg { width: 13px; height: 13px; }
.filebar-rest { flex: 1; height: 20px; background: #f0f0f0; border-bottom: 1px solid #bbb; }

.canvas { flex: 1; background: #000; }
.drawing { width: 100%; overflow: visible; }
.axis { font: 300 16px Lato, sans-serif; fill: #eee; }
.windows { fill: none; stroke: #6ff0f4; stroke-width: 4; }
.doors { fill: #79cdef; }
.ink path { fill: none; stroke: #0000f5; stroke-width: 3; stroke-linejoin: round; stroke-linecap: round; }
.ink path:first-child { stroke-width: 2; }
.ink .broad { stroke-width: 5; }

.sheets { display: flex; height: 18px; background: #f0f0f0; border-bottom: 2px solid #fff; font: 11px/16px "Noto Sans", sans-serif; }
.sheet { position: relative; z-index: 0; width: 66px; height: 16px; margin-right: -2px; line-height: 16px; }
.sheet svg { position: absolute; inset: 0; z-index: -1; width: 100%; height: 100%; }
.sheet path { fill: #d0d0d0; stroke: #333; }
.sheet.current { z-index: 1; color: #111; font-weight: 700; }
.sheet.current path { fill: #fff; }
.add-sheet { display: grid; place-items: center; width: 18px; height: 14px; margin: 1px 0 0 9px; border: 1px solid #aaa; background: #e5e5e5; }
.add-sheet svg { width: 11px; height: 11px; }

.command { color: #111; font: 17px/21px "Liberation Sans", sans-serif; }
.command-title { height: 27px; margin: 0; padding-left: 3px; border: solid #888; border-width: 2px 0; background: #c0c0c0; font: 700 11px/23px "Noto Sans", sans-serif; }
.history { display: flex; flex-direction: column; justify-content: flex-end; height: 74px; padding: 0 0 3px 4px; border: solid #aaa; border-width: 0 0 1px 1px; overflow: hidden; white-space: nowrap; }
.history div { flex: none; }
.prompt { display: flex; gap: 5px; height: 21px; padding-left: 4px; }
.prompt input { flex: 1; min-width: 0; padding: 0; border: 0; color: inherit; font: inherit; }

.status { display: flex; align-items: center; height: 27px; padding: 4px 0 1px 2px; background: #f0f0f0; }
.modes { display: flex; gap: 7px; margin: 0 9px 0 auto; }
.mode { display: grid; place-items: center; width: 22px; height: 22px; border: 1px solid #bbb; background: #e3e3e3; }
.mode svg { width: 20px; height: 20px; }
.mode.on { border-color: #3579b5; background: #cce4f7; }
.scale { width: 66px; height: 22px; padding-left: 4px; border: 1px solid #aaa; border-right: 0; background: #e3e3e3; overflow: hidden; text-align: left; white-space: nowrap; }
```
